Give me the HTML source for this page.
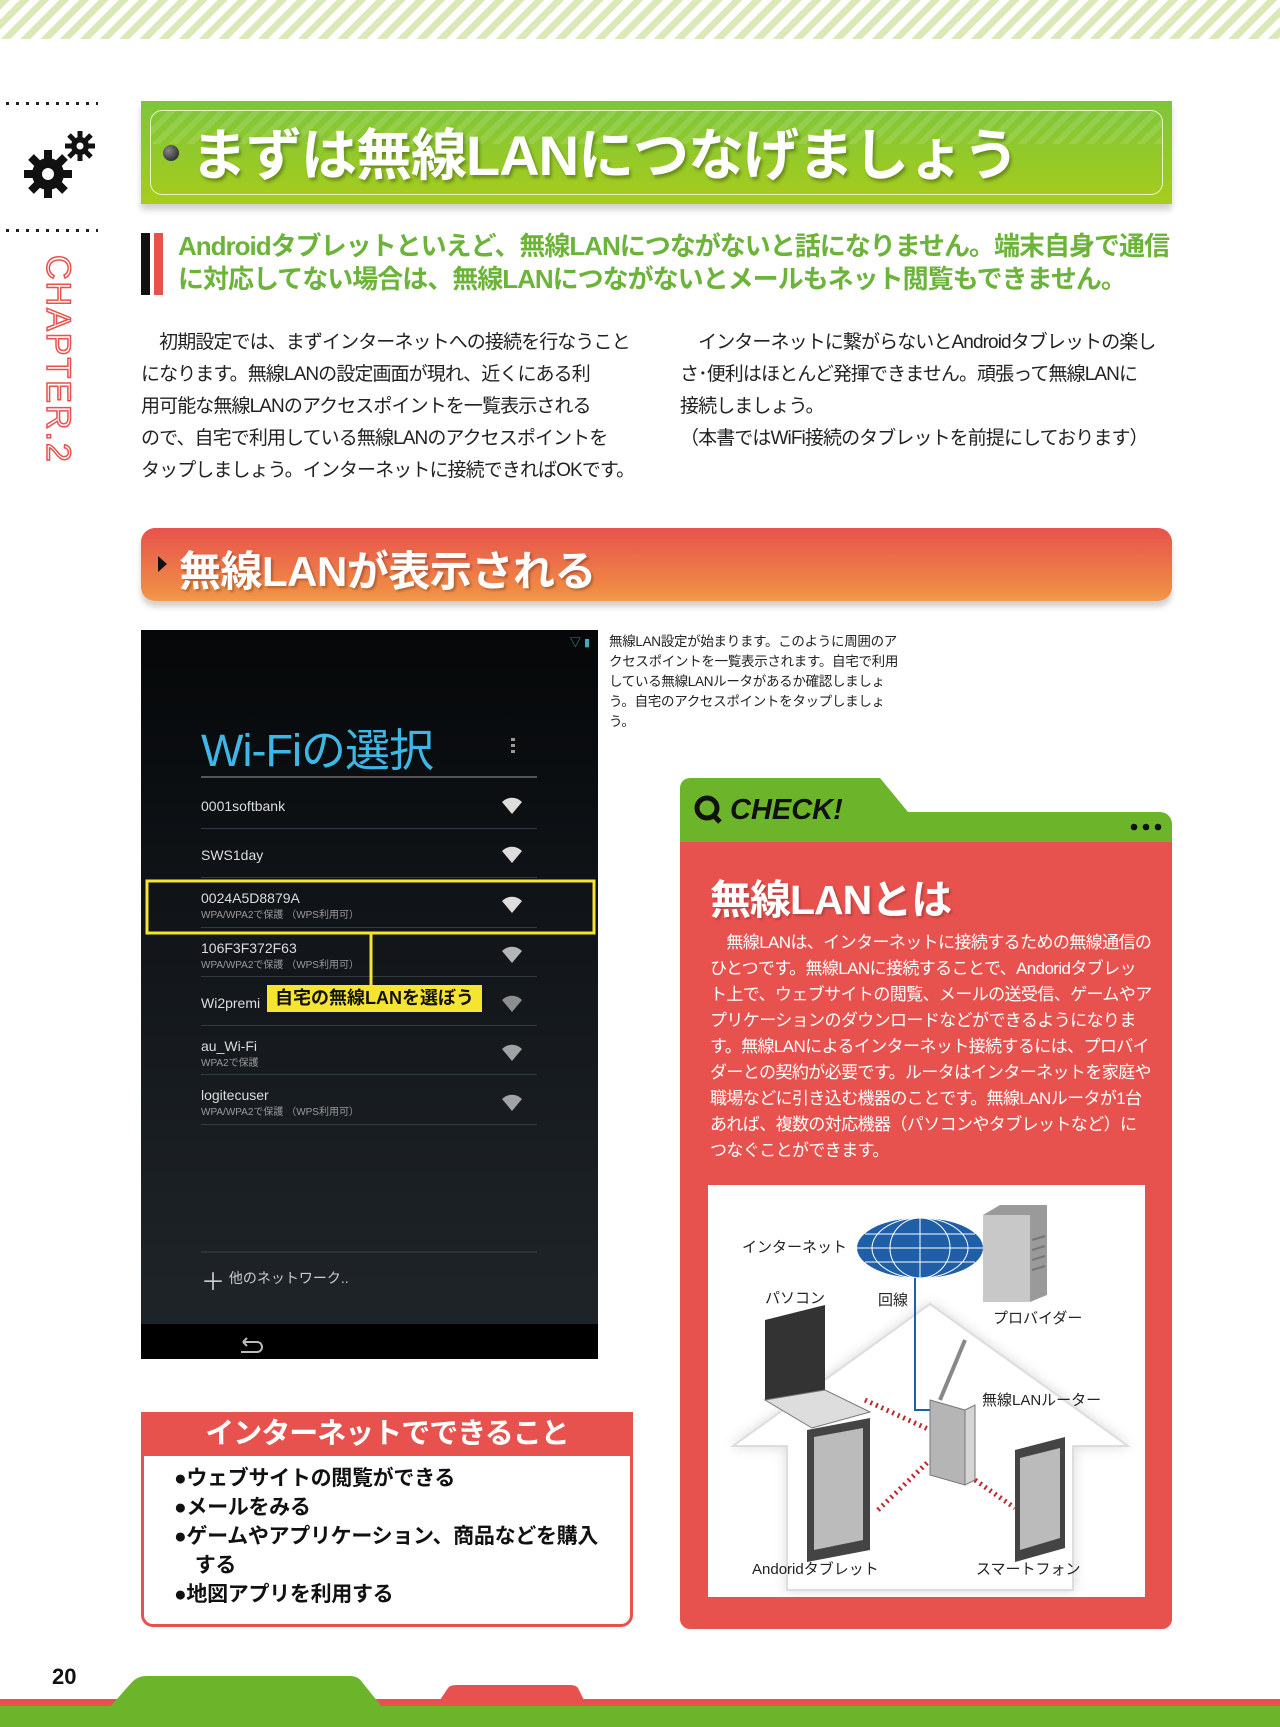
<!DOCTYPE html>
<html><head><meta charset="utf-8">
<style>
*{margin:0;padding:0;box-sizing:border-box}
body{width:1280px;height:1727px;position:relative;background:#fff;font-family:"Liberation Sans","Noto Sans CJK JP",sans-serif;overflow:hidden;color:#222}
.a{position:absolute}
.stripes{left:0;top:0;width:1280px;height:39px;background:repeating-linear-gradient(135deg,#dbe9b8 0 7px,#fff 7px 14px)}
.dots{left:6px;width:92px;height:3px;background:repeating-linear-gradient(90deg,#222 0 3px,transparent 3px 10px)}
.gtitle{left:141px;top:101px;width:1031px;height:103px;background:linear-gradient(#7cc63a,#a8cc1c);box-shadow:0 6px 6px rgba(0,0,0,.18)}
.gtitle .in{position:absolute;left:9px;top:9px;right:9px;bottom:9px;border:1.5px solid #e6f3c2;border-radius:12px;background:repeating-linear-gradient(135deg,rgba(255,255,255,.12) 0 6px,transparent 6px 12px) top/100% 40% no-repeat}
.gtitle .t{position:absolute;left:50px;top:10px;font-size:56px;font-weight:bold;color:#fff;letter-spacing:-1px;text-shadow:2px 3px 3px rgba(0,0,0,.3);white-space:nowrap}
.ball{width:16px;height:16px;border-radius:50%;background:radial-gradient(circle at 35% 35%,#888,#111)}
.lead{left:178px;top:230px;font-size:26px;line-height:33px;font-weight:bold;color:#6cb33a;white-space:nowrap;letter-spacing:-1px}
.body{font-size:19px;line-height:32px;color:#222;letter-spacing:-.9px;white-space:nowrap}
.rtitle{left:141px;top:528px;width:1031px;height:73px;border-radius:14px;background:linear-gradient(#e7524d,#f08a45 85%,#f29a4e);box-shadow:0 6px 6px rgba(0,0,0,.18)}
.rtitle .t{position:absolute;left:38px;top:10px;font-size:42px;font-weight:bold;color:#fff;text-shadow:2px 2px 2px rgba(0,0,0,.25);letter-spacing:-.5px}
.shot{left:141px;top:630px;width:457px;height:729px;background:linear-gradient(#050708,#111519 40%,#1e2328 90%)}
.row{position:absolute;left:60px;width:336px;border-bottom:1px solid #333a40;color:#ddd;font-size:14px}
.row small{display:block;font-size:10px;color:#9a9a9a}
.cap{left:609px;top:632px;width:292px;font-size:13.5px;line-height:20px;color:#222;letter-spacing:-.3px}
.ibox{left:141px;top:1412px;width:492px;height:215px;border:3px solid #e8524e;border-radius:0 0 12px 12px;border-top:none}
.ibox .h{height:44px;background:#e8524e;color:#fff;font-size:29px;font-weight:bold;text-align:center;line-height:44px;letter-spacing:-1px}
.ibox .l{padding:8px 0 0 30px;font-size:21px;font-weight:bold;line-height:29px;color:#111;letter-spacing:-.3px}
.chk{left:680px;top:842px;width:492px;height:787px;background:#e8524e;border-radius:0 0 10px 10px}
.dlabel{position:absolute;font-size:15px;color:#222;white-space:nowrap}
</style></head><body>
<div class="a stripes"></div>
<div class="a dots" style="top:102px"></div>
<div class="a dots" style="top:229px"></div>
<svg class="a" style="left:22px;top:128px" width="76" height="72" viewBox="0 0 76 72">
<g fill="#111"><circle cx="26" cy="46" r="16"/>
<g stroke="#111" stroke-width="8"><line x1="26" y1="22" x2="26" y2="70"/><line x1="2" y1="46" x2="50" y2="46"/><line x1="9" y1="29" x2="43" y2="63"/><line x1="43" y1="29" x2="9" y2="63"/></g>
<circle cx="26" cy="46" r="6" fill="#fff"/>
<circle cx="58" cy="18" r="9"/>
<g stroke="#111" stroke-width="5"><line x1="58" y1="3" x2="58" y2="33"/><line x1="43" y1="18" x2="73" y2="18"/><line x1="47" y1="7" x2="69" y2="29"/><line x1="69" y1="7" x2="47" y2="29"/></g>
<circle cx="58" cy="18" r="3.5" fill="#fff"/></g></svg>
<div class="a" style="left:40px;top:255px;width:36px;height:260px;"><div style="transform:rotate(90deg);transform-origin:0 0;position:absolute;left:36px;top:0;font-size:34px;letter-spacing:2px;white-space:nowrap;line-height:36px;-webkit-text-stroke:1.5px #e8524e;color:#fff">CHAPTER.2</div></div>

<div class="a gtitle"><div class="in"></div><div class="a ball" style="left:22px;top:44px"></div><div class="t">まずは無線LANにつなげましょう</div></div>

<div class="a" style="left:141px;top:233px;width:9px;height:62px;background:#111"></div>
<div class="a" style="left:154px;top:233px;width:9px;height:62px;background:#e8524e"></div>
<div class="a lead">Androidタブレットといえど、無線LANにつながないと話になりません。端末自身で通信<br>に対応してない場合は、無線LANにつながないとメールもネット閲覧もできません。</div>

<div class="a body" style="left:141px;top:327px">　初期設定では、まずインターネットへの接続を行なうこと<br>になります。無線LANの設定画面が現れ、近くにある利<br>用可能な無線LANのアクセスポイントを一覧表示される<br>ので、自宅で利用している無線LANのアクセスポイントを<br>タップしましょう。インターネットに接続できればOKです。</div>
<div class="a body" style="left:680px;top:327px">　インターネットに繋がらないとAndroidタブレットの楽し<br>さ･便利はほとんど発揮できません。頑張って無線LANに<br>接続しましょう。<br>（本書ではWiFi接続のタブレットを前提にしております）</div>

<div class="a rtitle"><div class="a" style="left:17px;top:28px;width:0;height:0;border-left:9px solid #111;border-top:8px solid transparent;border-bottom:8px solid transparent"></div><div class="t">無線LANが表示される</div></div>

<div class="a shot">
<div class="a" style="right:8px;top:4px;color:#4ab;font-size:11px">▽ ▮</div>
<div class="a" style="left:60px;top:84px;font-size:45px;color:#3fb7e6;white-space:nowrap;letter-spacing:-1px">Wi-Fiの選択</div>
<div class="a" style="left:370px;top:108px;width:4px;height:18px;background:repeating-linear-gradient(#999 0 3px,transparent 3px 6px)"></div>
<div class="a" style="left:60px;top:146px;width:336px;height:2px;background:#555"></div>
<div class="row" style="top:150px;height:49px;padding-top:18px">0001softbank</div>
<div class="row" style="top:199px;height:49px;padding-top:18px">SWS1day</div>
<div class="row" style="top:248px;height:50px;padding-top:12px">0024A5D8879A<small>WPA/WPA2で保護 （WPS利用可）</small></div>
<div class="row" style="top:298px;height:49px;padding-top:12px">106F3F372F63<small>WPA/WPA2で保護 （WPS利用可）</small></div>
<div class="row" style="top:347px;height:49px;padding-top:18px">Wi2premi</div>
<div class="row" style="top:396px;height:49px;padding-top:12px">au_Wi-Fi<small>WPA2で保護</small></div>
<div class="row" style="top:445px;height:50px;padding-top:12px">logitecuser<small>WPA/WPA2で保護 （WPS利用可）</small></div>
<svg class="a" style="left:0;top:0" width="457" height="729">
<g fill="#ddd"><path d="M361 172 a14 14 0 0 1 20 0 l-10 12z"/><path d="M361 221 a14 14 0 0 1 20 0 l-10 12z"/><path d="M361 271 a14 14 0 0 1 20 0 l-10 12z"/><path d="M361 321 a14 14 0 0 1 20 0 l-10 12z" opacity=".8"/><path d="M361 370 a14 14 0 0 1 20 0 l-10 12z" opacity=".6"/><path d="M361 419 a14 14 0 0 1 20 0 l-10 12z" opacity=".7"/><path d="M361 469 a14 14 0 0 1 20 0 l-10 12z" opacity=".7"/></g>
<line x1="60" y1="622" x2="396" y2="622" stroke="#444"/>
<rect x="0" y="694" width="457" height="35" fill="#000"/>
<path d="M102 712 h14 a5 5 0 0 1 0 10 h-16 M102 712 l4 -4 M102 712 l4 4" stroke="#bbb" stroke-width="2" fill="none"/>
<rect x="6" y="251" width="447" height="52" fill="none" stroke="#f5e530" stroke-width="3"/>
<line x1="230" y1="303" x2="230" y2="355" stroke="#f5e530" stroke-width="3"/>
</svg>
<div class="a" style="left:60px;top:632px;color:#ccc;font-size:14px"><span style="font-size:24px;vertical-align:middle">＋</span> 他のネットワーク..</div>
<div class="a" style="left:126px;top:355px;width:215px;height:27px;background:#f5e530;color:#111;font-weight:bold;font-size:18px;text-align:center;line-height:27px">自宅の無線LANを選ぼう</div>
</div>

<div class="a cap">無線LAN設定が始まります。このように周囲のアクセスポイントを一覧表示されます。自宅で利用している無線LANルータがあるか確認しましょう。自宅のアクセスポイントをタップしましょう。</div>

<svg class="a" style="left:680px;top:778px" width="492" height="66">
<path d="M10 0 H200 L228 34 H480 a12 12 0 0 1 12 12 V66 H0 V10 a10 10 0 0 1 10 -10z" fill="#6cb52b"/>
<circle cx="454" cy="49" r="3.3" fill="#111"/><circle cx="466" cy="49" r="3.3" fill="#111"/><circle cx="478" cy="49" r="3.3" fill="#111"/>
<circle cx="27" cy="30" r="10" fill="none" stroke="#111" stroke-width="5"/><line x1="33" y1="37" x2="40" y2="44" stroke="#111" stroke-width="5"/>
<text x="50" y="41" font-family="Liberation Sans,sans-serif" font-size="29" font-weight="bold" fill="#111" font-style="italic">CHECK!</text>
</svg>
<div class="a chk">
<div class="a" style="left:30px;top:24px;font-size:41px;font-weight:bold;color:#fff;text-shadow:2px 2px 2px rgba(0,0,0,.2);letter-spacing:-1px">無線LANとは</div>
<div class="a" style="left:30px;top:88px;width:442px;font-size:17px;line-height:26px;color:#fff;letter-spacing:-.6px">　無線LANは、インターネットに接続するための無線通信のひとつです。無線LANに接続することで、Andoridタブレット上で、ウェブサイトの閲覧、メールの送受信、ゲームやアプリケーションのダウンロードなどができるようになります。無線LANによるインターネット接続するには、プロバイダーとの契約が必要です。ルータはインターネットを家庭や職場などに引き込む機器のことです。無線LANルータが1台あれば、複数の対応機器（パソコンやタブレットなど）につなぐことができます。</div>
</div>
<div class="a" style="left:708px;top:1185px;width:437px;height:412px;background:#fff">
<svg width="437" height="412" viewBox="708 1185 437 412" style="position:absolute;left:0;top:0">
<path d="M930 1304 L1128 1446 H1073 V1590 H787 V1446 H733 Z" fill="#fff" stroke="#ddd" stroke-width="2" style="filter:drop-shadow(0 0 6px rgba(0,0,0,.15))"/>
<ellipse cx="920" cy="1248" rx="63" ry="30" fill="#1f5fa8"/>
<g stroke="#fff" stroke-width="1" fill="none"><ellipse cx="920" cy="1248" rx="30" ry="30"/><ellipse cx="920" cy="1248" rx="48" ry="30"/><line x1="920" y1="1218" x2="920" y2="1278"/><line x1="857" y1="1248" x2="983" y2="1248"/><line x1="865" y1="1234" x2="975" y2="1234"/><line x1="865" y1="1262" x2="975" y2="1262"/></g>
<path d="M983 1215 L1000 1205 H1047 V1295 L1030 1302 H983Z" fill="#9a9a9a"/><path d="M983 1215 H1030 V1302 H983Z" fill="#c8c8c8"/>
<g stroke="#777" stroke-width="2"><line x1="1032" y1="1240" x2="1045" y2="1236"/><line x1="1032" y1="1250" x2="1045" y2="1246"/><line x1="1032" y1="1260" x2="1045" y2="1256"/><line x1="1032" y1="1270" x2="1045" y2="1266"/></g>
<polyline points="915,1278 915,1410 930,1410" fill="none" stroke="#1f5fa8" stroke-width="2"/>
<line x1="940" y1="1400" x2="965" y2="1340" stroke="#888" stroke-width="4"/>
<path d="M930 1400 L965 1410 V1485 L930 1475Z" fill="#b5b5b5" stroke="#777"/><path d="M965 1410 L975 1405 V1480 L965 1485Z" fill="#d5d5d5" stroke="#777"/>
<path d="M765 1320 L825 1305 V1390 L765 1400Z" fill="#333"/><path d="M765 1400 L825 1390 L870 1412 L812 1428Z" fill="#ddd" stroke="#777"/>
<path d="M807 1430 L870 1418 V1550 L807 1562Z" fill="#444"/><path d="M814 1437 L863 1428 V1540 L814 1550Z" fill="#bbb"/>
<path d="M1015 1450 L1065 1437 V1548 L1015 1562Z" fill="#444"/><path d="M1020 1458 L1060 1448 V1538 L1020 1550Z" fill="#bbb"/>
<g stroke="#c0282b" stroke-width="5" stroke-dasharray="2 4"><line x1="865" y1="1400" x2="930" y2="1430"/><line x1="878" y1="1510" x2="930" y2="1460"/><line x1="975" y1="1480" x2="1015" y2="1508"/></g>
</svg>
<div class="dlabel" style="left:34px;top:51px">インターネット</div>
<div class="dlabel" style="left:57px;top:102px">パソコン</div>
<div class="dlabel" style="left:170px;top:104px">回線</div>
<div class="dlabel" style="left:285px;top:122px">プロバイダー</div>
<div class="dlabel" style="left:274px;top:204px">無線LANルーター</div>
<div class="dlabel" style="left:44px;top:373px">Andoridタブレット</div>
<div class="dlabel" style="left:268px;top:373px">スマートフォン</div>
</div>

<div class="a ibox"><div class="h">インターネットでできること</div>
<div class="l">●ウェブサイトの閲覧ができる<br>●メールをみる<br>●ゲームやアプリケーション、商品などを購入<br>　する<br>●地図アプリを利用する</div></div>

<div class="a" style="left:52px;top:1664px;font-size:22px;font-weight:bold;color:#111">20</div>
<div class="a" style="left:0;top:1699px;width:1280px;height:8px;background:#e8524e"></div>
<div class="a" style="left:0;top:1706px;width:1280px;height:21px;background:#6cb52b"></div>
<svg class="a" style="left:110px;top:1676px" width="500" height="32"><path d="M0 31 L22 6 Q28 0 36 0 H240 Q248 0 252 6 L272 31Z" fill="#6cb52b"/><path d="M330 24 L338 12 Q340 9 346 9 H460 Q466 9 468 12 L474 24Z" fill="#e8524e"/></svg>
</body></html>
